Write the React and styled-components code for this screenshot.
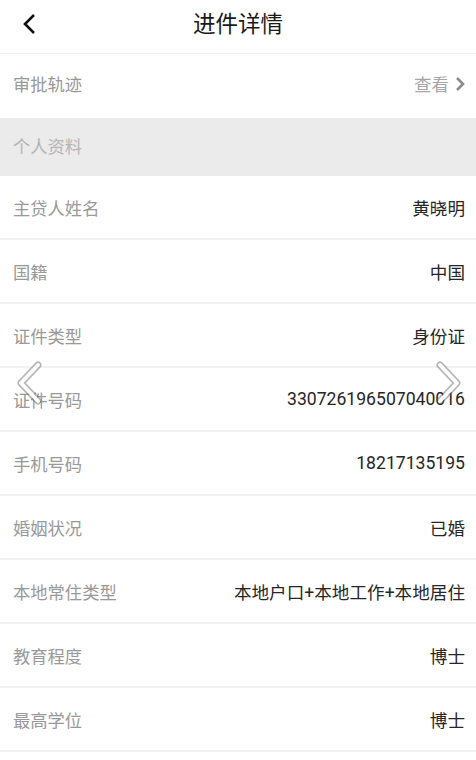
import React from "react";
import styled, { createGlobalStyle } from "styled-components";

const Global = createGlobalStyle`
  html, body { margin: 0; padding: 0; background: #fff; }
  body { font-family: Roboto, "Noto Sans CJK SC", sans-serif; }
  * { box-sizing: border-box; }
`;

const Page = styled.div`
  position: relative;
  width: 476px;
  height: 760px;
  overflow: hidden;
  background: #fff;
`;

const Header = styled.header`
  height: 54px;
  display: flex;
  align-items: center;
  justify-content: center;
  position: relative;
  border-bottom: 1px solid #efefef;
`;

const BackBtn = styled.div`
  position: absolute;
  left: 22px;
  top: 13px;
  width: 20px;
  height: 22px;
  display: flex;
  align-items: center;
`;

const Title = styled.h1`
  margin: 0;
  font-family: "Noto Sans CJK SC", sans-serif;
  font-size: 22.5px;
  font-weight: 400;
  color: #1a1a1a;
  line-height: 1;
  margin-top: -8px;
`;

const Row = styled.div`
  height: ${(p) => p.$h || 64}px;
  display: flex;
  align-items: center;
  justify-content: space-between;
  padding: 0 11px 0 13px;
  padding-bottom: ${(p) => p.$lift || 0}px;
  background: ${(p) => (p.$section ? "#ebebeb" : "#fff")};
  border-bottom: ${(p) => (p.$line ? "2px solid #f2f2f2" : "none")};
`;

const Label = styled.span`
  font-family: "Noto Sans CJK SC", sans-serif;
  font-size: 17.3px;
  color: ${(p) => (p.$light ? "#b4b4b4" : "#999")};
`;

const Value = styled.span`
  font-family: Roboto, "Noto Sans CJK SC", sans-serif;
  font-size: 17.6px;
  color: #262626;
  display: flex;
  align-items: center;
`;

const Link = styled.span`
  font-family: "Noto Sans CJK SC", sans-serif;
  font-size: 17.5px;
  color: #a6a6a6;
  display: flex;
  align-items: center;
  gap: 6px;
`;

const NavArrow = styled.div`
  position: absolute;
  top: 360px;
  ${(p) => (p.$right ? "right: 12px;" : "left: 14px;")}
  width: 32px;
  height: 46px;
`;

const rows = [
  ["主贷人姓名", "黄晓明"],
  ["国籍", "中国"],
  ["证件类型", "身份证"],
  ["证件号码", "330726196507040016"],
  ["手机号码", "18217135195"],
  ["婚姻状况", "已婚"],
  ["本地常住类型", "本地户口+本地工作+本地居住"],
  ["教育程度", "博士"],
  ["最高学位", "博士"],
];

function Chevron({ right }) {
  const d = right ? "M8 5 L25 23 L8 41" : "M24 5 L7 23 L24 41";
  return (
    <svg width="32" height="46" viewBox="0 0 32 46">
      <path d={d} fill="none" stroke="rgba(90,90,90,0.45)" strokeWidth="7" strokeLinecap="round" strokeLinejoin="round" />
      <path d={d} fill="none" stroke="#fff" strokeWidth="4" strokeLinecap="round" strokeLinejoin="round" />
    </svg>
  );
}

export default function App() {
  return (
    <Page>
      <Global />
      <Header>
        <BackBtn>
          <svg width="14" height="22" viewBox="0 0 14 22">
            <path d="M12 2 L3 11 L12 20" fill="none" stroke="#111" strokeWidth="2.6" />
          </svg>
        </BackBtn>
        <Title>进件详情</Title>
      </Header>
      <Row $h={64} $lift={5}>
        <Label>审批轨迹</Label>
        <Link>
          查看
          <svg width="10" height="16" viewBox="0 0 10 16">
            <path d="M2 2 L8 8 L2 14" fill="none" stroke="#8c8c8c" strokeWidth="2.6" />
          </svg>
        </Link>
      </Row>
      <Row $section $h={58} $lift={3}>
        <Label $light>个人资料</Label>
      </Row>
      {rows.map(([k, v]) => (
        <Row key={k} $line>
          <Label>{k}</Label>
          <Value>{v}</Value>
        </Row>
      ))}
      <NavArrow>
        <Chevron />
      </NavArrow>
      <NavArrow $right>
        <Chevron right />
      </NavArrow>
    </Page>
  );
}
